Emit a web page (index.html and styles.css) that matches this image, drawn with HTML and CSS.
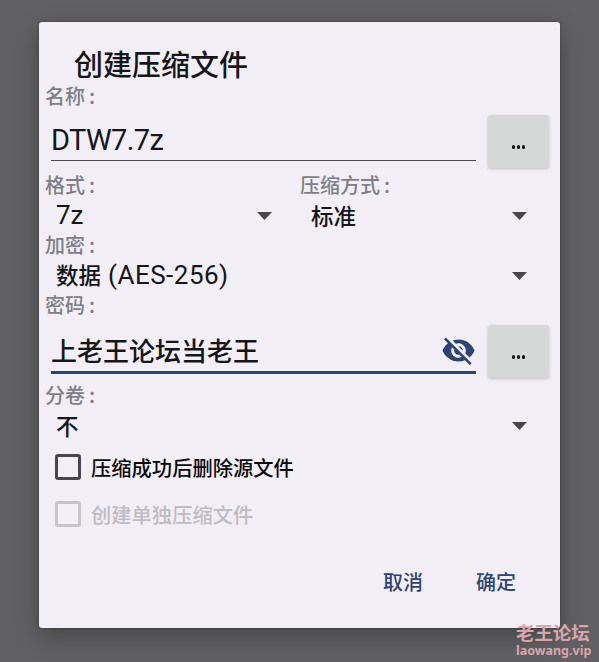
FILE: index.html
```html
<!DOCTYPE html>
<html lang="zh-CN">
<head>
<meta charset="utf-8">
<title>创建压缩文件</title>
<link rel="stylesheet" href="styles.css">
</head>
<body>
<main class="dialog">
  <h1 class="title">创建压缩文件</h1>
  <div class="label">名称<span class="colon">:</span></div>
  <div class="field-row">
    <div class="field"><span class="name">DTW7.7z</span></div>
    <button class="more"><i></i><i></i><i></i></button>
  </div>
  <div class="columns">
    <div>
      <div class="label">格式<span class="colon">:</span></div>
      <div class="select"><span class="latin">7z</span><span class="arrow"></span></div>
    </div>
    <div>
      <div class="label">压缩方式<span class="colon">:</span></div>
      <div class="select">标准<span class="arrow"></span></div>
    </div>
  </div>
  <div class="label">加密<span class="colon">:</span></div>
  <div class="select"><span>数据<span class="latin cipher">(AES-256)</span></span><span class="arrow"></span></div>
  <div class="label">密码<span class="colon">:</span></div>
  <div class="field-row password">
    <div class="field active"><span>上老王论坛当老王</span>
      <svg class="eye" viewBox="0 0 24 24"><path d="M12 7c2.76 0 5 2.24 5 5 0 .65-.13 1.26-.36 1.83l2.92 2.92c1.51-1.26 2.7-2.89 3.43-4.75-1.73-4.39-6-7.5-11-7.5-1.4 0-2.74.25-3.98.7l2.16 2.16C10.74 7.13 11.35 7 12 7zM2 4.27l2.28 2.28.46.46C3.08 8.3 1.78 10.02 1 12c1.73 4.39 6 7.5 11 7.5 1.55 0 3.03-.3 4.38-.84l.42.42L19.73 22 21 20.73 3.27 3 2 4.27zM7.53 9.8l1.55 1.55c-.05.21-.08.43-.08.65 0 1.66 1.34 3 3 3 .22 0 .44-.03.65-.08l1.55 1.55c-.67.33-1.41.53-2.2.53-2.76 0-5-2.24-5-5 0-.79.2-1.53.53-2.2zm4.31-.78l3.15 3.15.02-.16c0-1.66-1.34-3-3-3l-.17.01z"/></svg>
    </div>
    <button class="more"><i></i><i></i><i></i></button>
  </div>
  <div class="label">分卷<span class="colon">:</span></div>
  <div class="select">不<span class="arrow"></span></div>
  <div class="check"><span class="box"></span>压缩成功后删除源文件</div>
  <div class="check disabled"><span class="box"></span>创建单独压缩文件</div>
  <div class="actions"><button>取消</button><button>确定</button></div>
</main>
<div class="watermark"><b>老王论坛</b><span>laowang.vip</span></div>
</body>
</html>
```
FILE: styles.css
```css
* { box-sizing: border-box; }

body {
  margin: 0;
  width: 599px;
  height: 662px;
  padding: 22px 39px 0;
  overflow: hidden;
  background: #616163;
  font-family: "Noto Sans CJK SC", sans-serif;
  color: #16151a;
}

button {
  border: 0;
  padding: 0;
  background: none;
  font-family: inherit;
}

.dialog {
  width: 521px;
  height: 606px;
  padding-top: 26px;
  border-radius: 3px;
  background: #f1eff5;
  box-shadow: 0 9px 24px rgba(0, 0, 0, .28), 0 0 3px rgba(0, 0, 0, .3);
}

.title {
  margin: 0;
  padding-left: 35px;
  height: 34px;
  font-size: 29px;
  line-height: 31px;
  font-weight: 500;
}

.label {
  height: 30px;
  padding-left: 6px;
  font-size: 20px;
  line-height: 27px;
  font-weight: 500;
  color: #7f7e85;
}

.colon { margin-left: 4px; }

.field-row {
  display: flex;
  height: 59px;
  padding: 3px 11px 0 12px;
  justify-content: space-between;
}

.field-row.password {
  height: 60px;
  padding-top: 4px;
}

.field {
  display: flex;
  justify-content: space-between;
  width: 425px;
  height: 46px;
  border-bottom: 1.5px solid #4a4950;
  font-size: 26px;
  line-height: 49px;
  font-weight: 500;
}

.field.active {
  height: 49px;
  border-bottom: 3px solid #2c4374;
}

.name {
  font: 29px/50px Roboto, sans-serif;
  letter-spacing: -.6px;
}

.eye {
  width: 35px;
  height: 35px;
  margin: 8px 0 0;
  fill: #2c4374;
}

.more {
  display: flex;
  align-items: center;
  justify-content: center;
  gap: 2px;
  width: 61px;
  height: 53px;
  padding-top: 11px;
  border-radius: 3px;
  background: #d5d8d7;
  box-shadow: 0 1px 3px rgba(0, 0, 0, .2);
}

.more i {
  width: 3.3px;
  height: 3.3px;
  border-radius: 50%;
  background: #111;
}

.columns {
  display: grid;
  grid-template-columns: 255px 1fr;
}

.select {
  display: flex;
  align-items: center;
  justify-content: space-between;
  height: 30px;
  padding: 0 33px 3px 17px;
  font-size: 22.5px;
  line-height: 30px;
  font-weight: 500;
}

.columns > :first-child .select { padding-right: 22px; }

.latin {
  font: 26px/30px Roboto, sans-serif;
}

.cipher {
  margin-left: 7px;
  letter-spacing: .5px;
}

.arrow {
  width: 15px;
  height: 8px;
  margin-top: 3px;
  background: #47464d;
  clip-path: polygon(0 0, 100% 0, 50% 100%);
}

.check {
  display: flex;
  align-items: center;
  gap: 10px;
  height: 46px;
  margin-top: 3px;
  padding-left: 16px;
  font-size: 20.3px;
  font-weight: 500;
  color: #09090b;
}

.check.disabled {
  margin-top: 1px;
  color: #bebcc2;
}

.box {
  width: 26px;
  height: 26px;
  border: 3px solid #46454c;
  border-radius: 3px;
}

.disabled .box { border-color: #c5c3c9; }

.actions {
  display: flex;
  justify-content: flex-end;
  gap: 53px;
  padding: 30px 44px 0 0;
}

.actions button {
  font-size: 20px;
  line-height: 30px;
  font-weight: 500;
  color: #2c4374;
}

.watermark {
  position: absolute;
  left: 516px;
  top: 621px;
  display: flex;
  flex-direction: column;
  color: #d9a5ad;
}

.watermark b {
  font-size: 18.4px;
  line-height: 23px;
}

.watermark span {
  font: bold 12.5px/14px "Noto Sans", sans-serif;
}
```
